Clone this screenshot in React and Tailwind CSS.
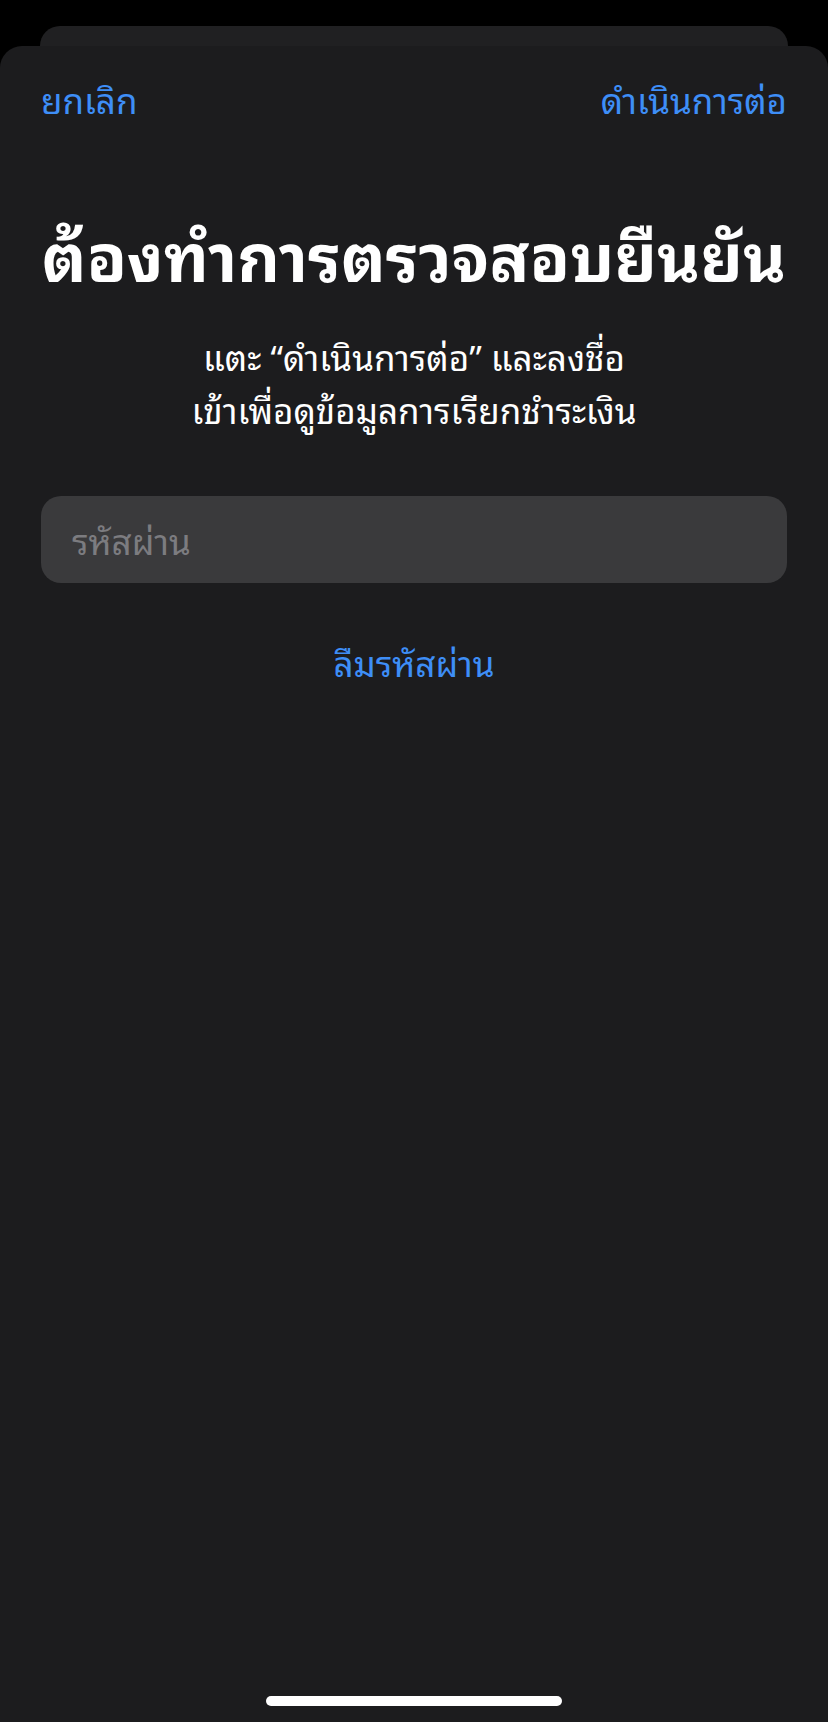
export default function App() {
  return (
    <div className="w-[828px] h-[1722px] bg-black flex flex-col overflow-hidden font-['Noto_Sans_Thai_Looped','Noto_Sans',sans-serif]">
      <div className="mx-[40px] mt-[26px] h-[20px] rounded-t-[20px] bg-[#202022] shrink-0" />
      <div className="flex-1 bg-[#1c1c1e] rounded-t-[22px] flex flex-col">
        <div className="flex justify-between items-center px-[41px] pt-[30px] text-[35px] leading-[44px] text-[#3e8ef7]">
          <span>ยกเลิก</span>
          <span>ดำเนินการต่อ</span>
        </div>
        <h1 className="mt-[92px] text-center text-[66px] leading-[80px] font-bold text-white whitespace-nowrap">ต้องทำการตรวจสอบยืนยัน</h1>
        <p className="mt-[37px] text-center text-[35px] leading-[53px] text-white">
          แตะ “ดำเนินการต่อ” และลงชื่อ<br />เข้าเพื่อดูข้อมูลการเรียกชำระเงิน
        </p>
        <div className="mx-[41px] mt-[61px] h-[87px] rounded-[20px] bg-[#3a3a3c] flex items-center px-[31px] text-[35px] text-[#7c7c80]">
          รหัสผ่าน
        </div>
        <div className="mt-[56px] text-center text-[35px] leading-[44px] text-[#3e8ef7]">ลืมรหัสผ่าน</div>
        <div className="flex-1" />
        <div className="flex justify-center pb-[16px]">
          <div className="w-[296px] h-[10px] rounded-full bg-white" />
        </div>
      </div>
    </div>
  );
}
